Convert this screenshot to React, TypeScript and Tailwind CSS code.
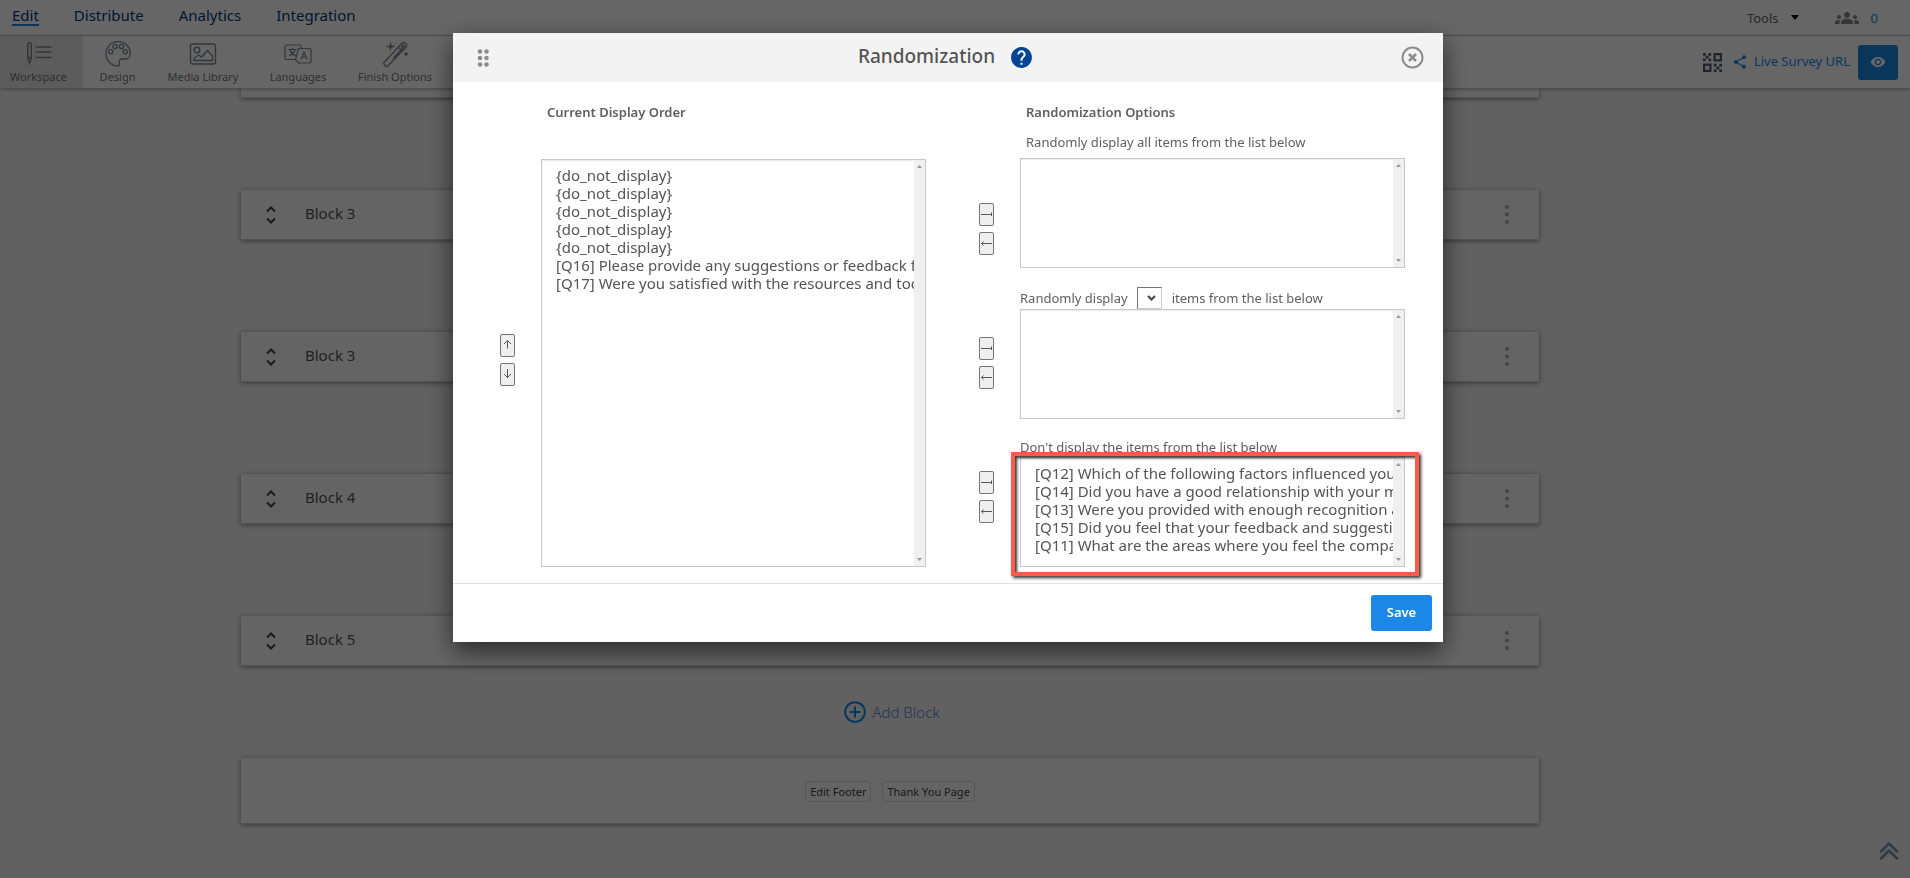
import { MdGroups, MdHelp, MdShare, MdVisibility } from "react-icons/md";

const icon = "h-7 w-7 fill-none stroke-[#7d8794]";

function WorkspaceIcon() {
  return (
    <svg viewBox="0 0 28 28" className={icon} strokeWidth="1.4">
      <path d="M2.7 4.500a1.300 1.300 0 0 1 3.600 0V18L4.500 23.500 2.700 18ZM2.700 18h3.600M10.500 7h16M10.500 12h16M10.500 17.500h16" />
    </svg>
  );
}

function DesignIcon() {
  return (
    <svg viewBox="0 0 28 28" className={icon} strokeWidth="1.3">
      <path d="M14 1.700C7.300 1.700 2 7 2 13.700S7.300 26 13.500 26c1.800 0 2.300-1.300 1.900-3-.5-2.200.3-4 2.600-4h3.500c2.700 0 4.800-2.300 4.800-5.500C26.300 6.700 20.700 1.700 14 1.700Z" />
      <circle cx="11" cy="6.500" r="2.100" />
      <circle cx="17.500" cy="6.500" r="2.100" />
      <circle cx="6.800" cy="11.800" r="2.100" />
      <circle cx="21.200" cy="11.800" r="2.100" />
    </svg>
  );
}

function MediaIcon() {
  return (
    <svg viewBox="0 0 28 28" className={icon} strokeWidth="1.4">
      <rect x="1.500" y="4" width="25" height="20" rx="2" />
      <circle cx="8" cy="10" r="2.800" />
      <path d="M5 20.500v-2l4.500-3.500 3 2 6-6.500 5 5.500v4.500Z" />
    </svg>
  );
}

function LanguagesIcon() {
  return (
    <svg viewBox="0 0 28 28" className={icon} strokeWidth="1.2">
      <path d="M12 19.500H2.500A1.500 1.500 0 0 1 1 18V6.500A1.500 1.500 0 0 1 2.500 5h13A1.500 1.500 0 0 1 17 6.500V8M14.500 8.500h11A1.500 1.500 0 0 1 27 10v11.500a1.500 1.500 0 0 1-1.500 1.500h-11L11.500 19.500ZM4.500 9.500h8M8.500 7.800v1.700M11 9.500c-.6 2.600-3 5-6 6.300M6 9.500c.6 2.600 3 5 6 6.300M17 19.500l3-7.500 3 7.500M18 17h4" />
    </svg>
  );
}

function WandIcon() {
  return (
    <svg viewBox="0 0 28 28" className={icon} strokeWidth="1.3">
      <path d="m3.200 22.300 18.200-19.500a1.500 1.500 0 0 1 2.200 0l1.700 1.700a1.500 1.500 0 0 1 0 2.200L6.800 26a1.500 1.500 0 0 1-2.200 0l-1.400-1.500a1.500 1.500 0 0 1 0-2.200ZM17.500 7.500l3.500 3.500M20 7.500l2.300-2.500 1.200 1.200L12 18.500M9.500 2.500v8M5.500 6.500h8M8.300 5.300l2.400 2.400M10.700 5.300 8.300 7.700M25 12v4M23 14h4" />
    </svg>
  );
}

function QrIcon() {
  return (
    <svg viewBox="0 0 19 19" className="h-[19px] w-[19px] fill-[#545e6b]" aria-hidden="true">
      <path fillRule="evenodd" d="M10.500 0H19v8.500h-8.500ZM12.700 2.200v4.100h4.100V2.200ZM0 10.500h8.500V19H0ZM2.200 12.700v4.100h4.100v-4.100Z" />
      <path d="M0 0h2.700v2.700H0ZM5.500 0h2.700v2.700H5.500ZM2.700 2.700h2.800v2.800H2.700ZM0 5.500h2.700v2.700H0ZM5.500 5.500h2.700v2.700H5.500ZM10.800 10.800h2.700v2.700h-2.700ZM16.300 10.800H19v2.700h-2.700ZM13.500 13.500h2.800v2.800h-2.800ZM10.800 16.300h2.700V19h-2.700ZM16.300 16.300H19V19h-2.700Z" />
    </svg>
  );
}

const tools = [
  { label: "Workspace", Icon: WorkspaceIcon, style: "w-[83px] bg-[#e6e6e6] pr-1.5" },
  { label: "Design", Icon: DesignIcon, style: "w-[69px]" },
  { label: "Media Library", Icon: MediaIcon, style: "w-[102px]" },
  { label: "Languages", Icon: LanguagesIcon, style: "w-[88px]" },
  { label: "Finish Options", Icon: WandIcon, style: "w-[106px]" },
];

function TopNav() {
  return (
    <nav className="flex h-9 items-center justify-between border-b border-[#d0d0d0] bg-white pr-8 pl-3 text-[15px] leading-[18px] text-[#003a80]">
      <div className="flex h-full items-start gap-[35px] pt-1.5">
        <a href="#edit" className="border-b-2 border-[#1b87e6]">Edit</a>
        <a href="#distribute">Distribute</a>
        <a href="#analytics">Analytics</a>
        <a href="#integration">Integration</a>
      </div>
      <div className="flex items-center text-[13px]">
        <button type="button" className="flex items-center gap-3 text-[#666]">
          Tools
          <svg viewBox="0 0 8 5" className="h-[5px] w-2 fill-black"><path d="M0 0h8L4 5Z" /></svg>
        </button>
        <a href="#collaborators" className="ml-9 flex items-center gap-3 text-[#1b87e6]">
          <MdGroups className="h-7 w-6 text-[#888]" aria-label="Collaborators" />
          0
        </a>
      </div>
    </nav>
  );
}

function Toolbar() {
  return (
    <div className="relative flex h-[52px] justify-between bg-white pr-3 shadow-[0_1px_4px_rgba(0,0,0,0.35)]">
      <div className="flex text-[11px] leading-4 text-[#777]">
        {tools.map(({ label, Icon, style }) => (
          <button key={label} type="button" className={"flex shrink-0 flex-col items-center whitespace-nowrap pt-1 " + style}>
            <Icon />
            <span className="mt-px">{label}</span>
          </button>
        ))}
      </div>
      <div className="flex items-center text-[13px] text-[#1b87e6]">
        <QrIcon />
        <a href="#live" className="ml-2.5 flex items-center gap-1.5"><MdShare className="h-4 w-4" />Live Survey URL</a>
        <button type="button" aria-label="Preview" className="ml-2 flex h-[35px] w-10 items-center justify-center rounded-[3px] bg-[#1b87e6] text-white">
          <MdVisibility className="h-4 w-4" />
        </button>
      </div>
    </div>
  );
}

const card = "border-b border-[#ccc] bg-[#fbfbfb] shadow-[0_1px_5px_rgba(0,0,0,0.45)]";

function Block({ name }: { name: string }) {
  return (
    <section className={"mb-[92px] flex h-[50px] items-center px-6 " + card}>
      <svg viewBox="0 0 12 18" className="h-[18px] w-3 fill-none stroke-[#444]" strokeWidth="2"><path d="m2 5.500 4-4 4 4M2 12.500l4 4 4-4" /></svg>
      <h2 className="ml-7 grow pb-1 text-[15px] leading-5 text-[#545454]">{name}</h2>
      <button type="button" aria-label="Block menu">
        <svg viewBox="0 0 4 19" className="h-[19px] w-4 fill-[#aaa]"><circle cx="2" cy="2" r="2" /><circle cx="2" cy="9.500" r="2" /><circle cx="2" cy="17" r="2" /></svg>
      </button>
    </section>
  );
}

function Workspace() {
  return (
    <main className="mr-[371px] ml-[241px] pb-12">
      <div className={"mb-[92px] h-2.5 " + card} />
      <Block name="Block 3" />
      <Block name="Block 3" />
      <Block name="Block 4" />
      <Block name="Block 5" />
      <div className="-mt-[60px] mb-8 flex h-7 justify-center pl-1">
        <button type="button" className="flex items-center gap-1.5 text-[15px] font-light text-[#5c7fd0]">
          <svg viewBox="0 0 22 22" className="h-[22px] w-[22px] fill-none stroke-[#1b87e6]" strokeWidth="2"><circle cx="11" cy="11" r="9.800" /><path d="M11 5.500v11M5.500 11h11" /></svg>
          Add Block
        </button>
      </div>
      <footer className={"flex h-[66px] items-center justify-center gap-[11px] pt-0.5 text-[11px] leading-4 text-[#444] " + card}>
        <button type="button" className="h-[21px] rounded-sm border border-[#d8d8d8] px-1">Edit Footer</button>
        <button type="button" className="h-[21px] rounded-sm border border-[#d8d8d8] px-1">Thank You Page</button>
      </footer>
    </main>
  );
}

const placed = [
  "{do_not_display}",
  "{do_not_display}",
  "{do_not_display}",
  "{do_not_display}",
  "{do_not_display}",
  "[Q16] Please provide any suggestions or feedback for",
  "[Q17] Were you satisfied with the resources and tools",
];

const hidden = [
  "[Q12] Which of the following factors influenced your",
  "[Q14] Did you have a good relationship with your manager",
  "[Q13] Were you provided with enough recognition and",
  "[Q15] Did you feel that your feedback and suggestions",
  "[Q11] What are the areas where you feel the company",
];

function ListBox({ id, items, size }: { id: string; items: string[]; size: string }) {
  return (
    <div className={"flex border border-[#c8c8c8] bg-white shadow-[inset_0_1px_1px_rgba(0,0,0,0.08)] " + size}>
      <select id={id} multiple className="min-w-0 grow overflow-hidden bg-transparent pt-[5px] text-[15px] leading-[18px] text-[#545454] outline-none">
        {items.map((item, i) => (
          <option key={i} className="h-[18px] min-h-0 px-3.5 py-0 leading-[18px]">{item}</option>
        ))}
      </select>
      <div className="flex w-[11px] shrink-0 flex-col items-center justify-between bg-[#f0f0f0] py-[5px]" aria-hidden="true">
        <svg viewBox="0 0 5 3" className="h-[3px] w-[5px] fill-[#999]"><path d="M0 3h5L2.500 0Z" /></svg>
        <svg viewBox="0 0 5 3" className="h-[3px] w-[5px] fill-[#999]"><path d="M0 0h5L2.500 3Z" /></svg>
      </div>
    </div>
  );
}

const arrows = {
  up: "M6.500 13.500V6M3 9l3.500-3.500L10 9",
  down: "M6.500 5v8.500M3 10l3.500 3.500L10 10",
  right: "M1 10.500h11M11.500 8.500v3.500",
  left: "M1.500 10.500H12M3.500 8.500l-2 2 2 2",
};

function ArrowButton({ to, label }: { to: keyof typeof arrows; label: string }) {
  return (
    <button type="button" aria-label={label} className="h-[23px] w-[15px] rounded-xs border border-[#767676] bg-[#efefef]">
      <svg viewBox="0 0 13 21" className="h-[21px] w-[13px] fill-none stroke-[#555]"><path d={arrows[to]} /></svg>
    </button>
  );
}

function MovePair({ list }: { list: string }) {
  return (
    <div className="flex flex-col gap-1.5">
      <ArrowButton to="right" label={"Add to " + list} />
      <ArrowButton to="left" label={"Remove from " + list} />
    </div>
  );
}

function RandomizationDialog() {
  return (
    <div role="dialog" aria-labelledby="dialog-title" className="w-[990px] max-w-full bg-white text-[#5f5f5f] shadow-[0_9px_24px_rgba(0,0,0,0.6)]">
      <header className="flex h-[49px] items-center justify-between bg-[#f3f3f3] pr-[19px] pl-6">
        <svg viewBox="0 0 14 18" className="h-[18px] w-3.5 fill-[#8c8c8c]" aria-hidden="true">
          <circle cx="3" cy="2.500" r="2.300" /><circle cx="3" cy="9" r="2.300" /><circle cx="3" cy="15.500" r="2.300" />
          <circle cx="9.500" cy="2.500" r="2.300" /><circle cx="9.500" cy="9" r="2.300" /><circle cx="9.500" cy="15.500" r="2.300" />
        </svg>
        <div className="flex items-center gap-3.5">
          <h1 id="dialog-title" className="pb-1 text-[19px] leading-6 font-medium text-[#545454]">Randomization</h1>
          <a href="#help" aria-label="Help"><MdHelp className="h-[25px] w-[25px] text-[#004496]" /></a>
        </div>
        <button type="button" aria-label="Close">
          <svg viewBox="0 0 23 23" className="h-[23px] w-[23px] fill-none stroke-[#8c8c8c]" strokeWidth="2"><circle cx="11.500" cy="11.500" r="10" /><path d="m8 8 7 7M15 8l-7 7" strokeWidth="2.500" /></svg>
        </button>
      </header>
      <div className="flex pr-[38px] pb-4 pl-[47px] text-[13px] leading-5">
        <div className="flex shrink-0 flex-col gap-1.5 pt-[252px]">
          <ArrowButton to="up" label="Move up" />
          <ArrowButton to="down" label="Move down" />
        </div>
        <div className="ml-[26px] flex min-w-0 flex-1 flex-col pt-5">
          <label htmlFor="order" className="mb-[37px] pl-1.5 font-semibold">Current Display Order</label>
          <ListBox id="order" items={placed} size="grow" />
        </div>
        <div className="ml-[53px] flex shrink-0 flex-col gap-[82px] pt-[121px]">
          <MovePair list="all items" />
          <MovePair list="some items" />
          <MovePair list="hidden items" />
        </div>
        <div className="ml-[26px] flex min-w-0 flex-1 flex-col pt-5">
          <h2 className="pl-1.5 font-semibold">Randomization Options</h2>
          <label htmlFor="all" className="mt-2.5 mb-1.5 pl-1.5">Randomly display all items from the list below</label>
          <ListBox id="all" items={[]} size="h-[110px]" />
          <div className="mt-[19px] flex items-center">
            <label htmlFor="count">Randomly display</label>
            <div className="relative mr-2.5 ml-[9px] flex">
              <select id="count" className="h-[22px] w-[25px] appearance-none border border-t-[#767676] border-r-[#ccc] border-b-[#ccc] border-l-[#767676] bg-white" />
              <svg viewBox="0 0 9 6" className="pointer-events-none absolute top-2 right-1.5 h-1.5 w-[9px] fill-none stroke-[#444]" strokeWidth="2"><path d="m1 1 3.500 3.500L8 1" /></svg>
            </div>
            <label htmlFor="some">items from the list below</label>
          </div>
          <ListBox id="some" items={[]} size="h-[110px]" />
          <label htmlFor="hidden" className="mt-[18px]">Don't display the items from the list below</label>
          <div className="relative">
            <ListBox id="hidden" items={hidden} size="h-[110px]" />
            <div className="pointer-events-none absolute -top-[5px] -right-3.5 -bottom-[9px] -left-[9px] border-4 border-[#ff5a4a] shadow-[2px_2px_3px_rgba(0,0,0,0.8),inset_2px_2px_3px_rgba(0,0,0,0.8)]" />
          </div>
        </div>
      </div>
      <footer className="flex justify-end border-t border-[#e2e2e2] py-[11px] pr-[11px]">
        <button type="button" className="h-9 w-[61px] rounded-[3px] bg-[#1b87e6] text-[13px] font-semibold text-white">Save</button>
      </footer>
    </div>
  );
}

export default function App() {
  return (
    <div className="min-h-screen bg-[#f3f3f3] font-['Noto_Sans',sans-serif]">
      <TopNav />
      <Toolbar />
      <Workspace />
      <a href="#top" aria-label="Back to top" className="fixed right-[11px] bottom-[18px]">
        <svg viewBox="0 0 20 19" className="h-[19px] w-5 fill-none stroke-[#7594b5]" strokeWidth="2.500" strokeLinecap="round" strokeLinejoin="round"><path d="m2 10.500 8-8 8 8M2 17.500l8-8 8 8" /></svg>
      </a>
      <div className="fixed inset-0 flex items-start justify-center bg-black/60 pt-[33px] pr-3.5">
        <RandomizationDialog />
      </div>
    </div>
  );
}
